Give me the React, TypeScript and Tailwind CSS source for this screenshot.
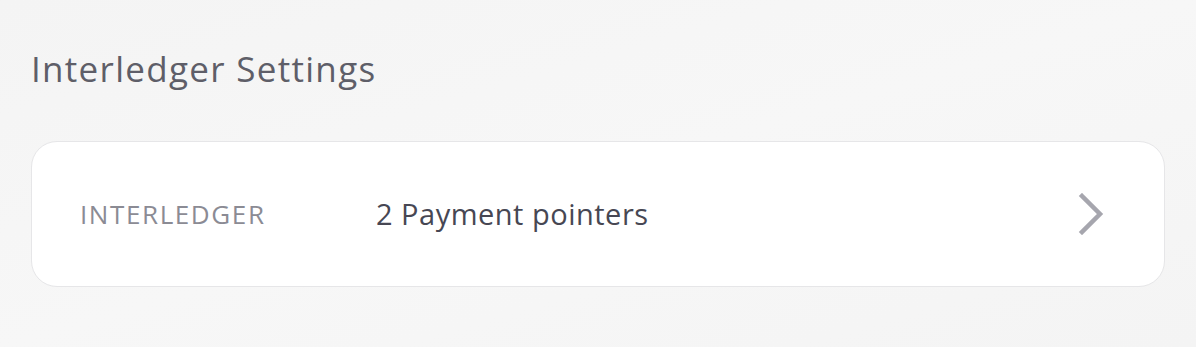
export default function App() {
  return (
    <div className="w-full min-h-[347px] bg-gradient-to-br from-[#f4f4f4] via-[#f7f7f7] to-[#f4f4f4] px-[31px] pt-[45px] font-['Open_Sans',sans-serif]">
      {/* Section title */}
      <h1 className="text-[35px] leading-[48px] tracking-[1.3px] text-[#5e5e68] font-normal">Interledger Settings</h1>

      {/* Settings card */}
      <div className="mt-[48px] w-[1134px] h-[146px] bg-white border border-[#e6e6e8] rounded-[26px] flex items-center pl-[48px] pr-[60px]">
        <span className="w-[296px] text-[26px] tracking-[1.6px] text-[#8b8b94]">INTERLEDGER</span>
        <span className="flex-1 text-[29px] tracking-[0.5px] font-medium text-[#474753]">2 Payment pointers</span>
        <svg width="26" height="42" viewBox="0 0 26 42" fill="none" aria-hidden="true">
          <path d="M4 3 L22 21 L4 39" stroke="#a6a6ae" strokeWidth="4.5" strokeLinecap="square" strokeLinejoin="miter" />
        </svg>
      </div>
    </div>
  );
}
